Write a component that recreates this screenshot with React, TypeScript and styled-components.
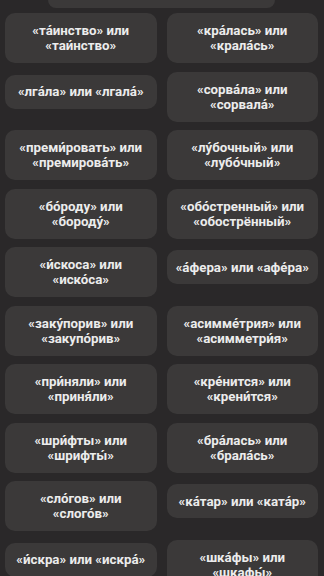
import styled, { createGlobalStyle } from "styled-components";

const GlobalStyle = createGlobalStyle`
  html, body {
    margin: 0;
    padding: 0;
    background: #2a2829;
  }
  body {
    font-family: Roboto, "Noto Sans", "DejaVu Sans", sans-serif;
    -webkit-font-smoothing: antialiased;
  }
`;

const Page = styled.main`
  width: 324px;
  height: 576px;
  overflow: hidden;
  box-sizing: border-box;
  padding: 0 6px 0 5px;
  background: #2a2829;
`;

const Stub = styled.div`
  width: 227px;
  height: 8px;
  margin: 0 auto 5px 43px;
  background: #3b3939;
  border-radius: 0 0 10px 10px;
`;

const Grid = styled.section`
  display: grid;
  grid-template-columns: 1fr 1fr;
  column-gap: 10px;
  row-gap: 8.5px;
  align-items: start;
`;

const Card = styled.button<{ $single?: boolean }>`
  display: flex;
  align-items: center;
  justify-content: center;
  box-sizing: border-box;
  min-height: ${(p) => (p.$single ? "34px" : "50px")};
  margin-top: ${(p) => (p.$single ? "3px" : "0")};
  padding: 0 9px;
  border: none;
  border-radius: 10px;
  background: #3b3939;
  color: #ececec;
  font-family: Roboto, "Noto Sans", sans-serif;
  font-weight: 700;
  font-size: 13.3px;
  line-height: 15px;
  text-align: center;
`;

const words: [string, string][] = [
  ["та́инство", "таи́нство"],
  ["кра́лась", "крала́сь"],
  ["лга́ла", "лгала́"],
  ["сорва́ла", "сорвала́"],
  ["преми́ровать", "премирова́ть"],
  ["лу́бочный", "лубо́чный"],
  ["бо́роду", "бороду́"],
  ["обо́стренный", "обострённый"],
  ["и́скоса", "иско́са"],
  ["а́фера", "афе́ра"],
  ["заку́порив", "закупо́рив"],
  ["асимме́трия", "асимметри́я"],
  ["при́няли", "приня́ли"],
  ["кре́нится", "крени́тся"],
  ["шри́фты", "шрифты́"],
  ["бра́лась", "брала́сь"],
  ["сло́гов", "слого́в"],
  ["ка́тар", "ката́р"],
  ["и́скра", "искра́"],
  ["шка́фы", "шкафы́"],
];

const singles = new Set([2, 9, 17, 18]);

export default function App() {
  return (
    <>
      <GlobalStyle />
      <Page>
        <Stub />
        <Grid>
          {words.map(([a, b], i) => (
            <Card key={i} $single={singles.has(i)}>
              «{a}» или «{b}»
            </Card>
          ))}
        </Grid>
      </Page>
    </>
  );
}
